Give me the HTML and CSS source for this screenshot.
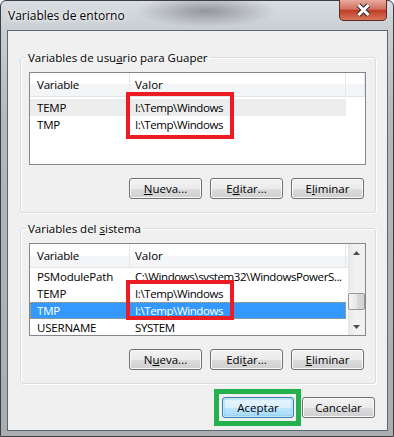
FILE: index.html
```html
<!DOCTYPE html>
<html lang="es">
    <head>
        <meta charset="UTF-8">
        <meta name="viewport" content="width=device-width, initial-scale=1.0">
        <title>Variables de entorno</title>
        <link rel="stylesheet" href="styles.css">
    </head>
    <body>
        <div class="desktop">
            <div class="window">
                <!-- Title bar -->
                <div class="titlebar">
                    <span class="title">Variables de entorno</span>
                    <div class="close-btn">
                        <svg width="48" height="21" viewBox="0 0 48 21">
                            <defs>
                                <linearGradient id="closeGrad" x1="0" y1="0" x2="0" y2="1">
                                    <stop offset="0" stop-color="#e9aa9e"/>
                                    <stop offset="0.45" stop-color="#d26f5e"/>
                                    <stop offset="0.5" stop-color="#c13b26"/>
                                    <stop offset="1" stop-color="#d77a5e"/>
                                </linearGradient>
                            </defs>
                            <path d="M0.5 0 V16 Q0.5 20.5 5 20.5 H43 Q47.5 20.5 47.5 16 V0" fill="url(#closeGrad)" stroke="#5b2b24"/>
                            <path d="M19.5 5 L29.5 15 M29.5 5 L19.5 15" stroke="#3b2c2a" stroke-width="5"/>
                            <path d="M19.5 5 L29.5 15 M29.5 5 L19.5 15" stroke="#ffffff" stroke-width="3"/>
                        </svg>
                    </div>
                </div>

                <!-- Client area -->
                <div class="client">
                    <!-- User variables -->
                    <fieldset class="group group-user">
                        <legend>Variables de usu<u>a</u>rio para Guaper</legend>
                        <div class="listview">
                            <div class="lv-main">
                                <div class="lv-header">
                                    <div class="col col-name">Variable</div>
                                    <div class="col col-value">Valor</div>
                                    <div class="col col-rest"></div>
                                </div>
                                <div class="lv-rows rows-user">
                                    <div class="lv-row row-inactive">
                                        <span class="col col-name">TEMP</span>
                                        <span class="col col-value">I:\Temp\Windows</span>
                                    </div>
                                    <div class="lv-row">
                                        <span class="col col-name">TMP</span>
                                        <span class="col col-value">I:\Temp\Windows</span>
                                    </div>
                                </div>
                            </div>
                        </div>
                        <div class="group-buttons">
                            <button class="btn"><u>N</u>ueva...</button>
                            <button class="btn">E<u>d</u>itar...</button>
                            <button class="btn">E<u>l</u>iminar</button>
                        </div>
                    </fieldset>

                    <!-- System variables -->
                    <fieldset class="group group-system">
                        <legend>Variables del <u>s</u>istema</legend>
                        <div class="listview">
                            <div class="lv-main">
                                <div class="lv-header">
                                    <div class="col col-name">Variable</div>
                                    <div class="col col-value">Valor</div>
                                </div>
                                <div class="lv-rows">
                                    <div class="lv-row">
                                        <span class="col col-name">PSModulePath</span>
                                        <span class="col col-value">C:\Windows\system32\WindowsPowerS...</span>
                                    </div>
                                    <div class="lv-row">
                                        <span class="col col-name">TEMP</span>
                                        <span class="col col-value">I:\Temp\Windows</span>
                                    </div>
                                    <div class="lv-row row-selected">
                                        <span class="col col-name">TMP</span>
                                        <span class="col col-value">I:\Temp\Windows</span>
                                    </div>
                                    <div class="lv-row">
                                        <span class="col col-name">USERNAME</span>
                                        <span class="col col-value">SYSTEM</span>
                                    </div>
                                </div>
                            </div>
                            <div class="scrollbar">
                                <div class="sb-arrow">
                                    <svg width="7" height="4" viewBox="0 0 7 4"><path d="M3.5 0 L7 4 H0 Z" fill="#4d4d4d"/></svg>
                                </div>
                                <div class="sb-track">
                                    <div class="sb-thumb"></div>
                                </div>
                                <div class="sb-arrow">
                                    <svg width="7" height="4" viewBox="0 0 7 4"><path d="M0 0 H7 L3.5 4 Z" fill="#4d4d4d"/></svg>
                                </div>
                            </div>
                        </div>
                        <div class="group-buttons">
                            <button class="btn">N<u>u</u>eva...</button>
                            <button class="btn">Edi<u>t</u>ar...</button>
                            <button class="btn"><u>E</u>liminar</button>
                        </div>
                    </fieldset>

                    <!-- Dialog buttons -->
                    <div class="dialog-buttons">
                        <button class="btn btn-default">Aceptar</button>
                        <button class="btn">Cancelar</button>
                    </div>
                </div>
            </div>

            <!-- Annotation marks -->
            <div class="mark mark-red mark-user"></div>
            <div class="mark mark-red mark-system"></div>
            <div class="mark mark-green"></div>
        </div>
    </body>
</html>
```

FILE: styles.css
```css
* {
    box-sizing: border-box;
}

body {
    margin: 0;
    font-family: "Open Sans", sans-serif;
    font-size: 11.5px;
    color: #000;
    background-color: #fff;
}

.desktop {
    position: relative;
    width: 394px;
    height: 437px;
}

.window {
    width: 394px;
    height: 437px;
    display: flex;
    flex-direction: column;
    padding: 0 5px 5px 6px;
    border: 1px solid #3d3f42;
    border-radius: 6px 6px 0 0;
    background:
        radial-gradient(ellipse 70px 16px at 205px 10px, rgba(70, 72, 76, 0.45), rgba(70, 72, 76, 0)),
        linear-gradient(#d8dde2, #c9ced3 29px, #b3b8bd 120px, #a9aeb3);
}

.titlebar {
    height: 29px;
    display: flex;
    justify-content: space-between;
    align-items: flex-start;
}

.title {
    padding: 7px 0 0 1px;
    font-size: 12px;
    line-height: 15px;
    color: #000;
    text-shadow: 0 0 6px #fff, 0 0 3px #fff;
}

.close-btn {
    margin: -1px 1px 0 0;
    height: 21px;
}

.close-btn svg {
    display: block;
}

.client {
    flex: 1;
    display: flex;
    flex-direction: column;
    padding: 0 11px 0 12px;
    border: 1px solid #5d6670;
    background-color: #f0f0f0;
}

/* Group boxes */
.group {
    margin: 0;
    padding: 7px 9px 13px 8px;
    border: 1px solid #d5dfe5;
    border-radius: 3px;
    box-shadow: inset 1px 1px 0 #fff, 1px 1px 0 #fff;
}

.group-user {
    margin-top: 19px;
}

.group-system {
    margin-top: 8px;
}

.group legend {
    margin-left: -3px;
    padding: 0 2px;
    line-height: 15px;
}

/* List views */
.listview {
    height: 93px;
    display: flex;
    border: 1px solid #828790;
    background-color: #fff;
}

.lv-main {
    flex: 1;
}

.lv-header {
    display: flex;
    height: 24px;
    border-bottom: 1px solid #e5e5e5;
    background: linear-gradient(#fff 50%, #f4f5f7 50%);
}

.lv-header .col {
    line-height: 23px;
    border-right: 1px solid #e3e8ee;
}

.lv-header .col-rest {
    flex: 1;
}

.rows-user {
    padding-top: 2px;
}

.col {
    white-space: nowrap;
    overflow: hidden;
}

.col-name {
    width: 100px;
    padding-left: 7px;
    letter-spacing: -0.2px;
}

.col-value {
    width: 216px;
    padding-left: 5px;
    letter-spacing: -0.4px;
}

.lv-header .col-value {
    letter-spacing: 0;
}

.lv-row {
    display: flex;
    width: 316px;
    height: 17px;
    line-height: 17px;
}

.row-inactive {
    background-color: #ededed;
}

.row-selected {
    color: #fff;
    background-color: #3399ff;
    outline: 1px dotted #e39a3c;
    outline-offset: -1px;
}

/* Scrollbar */
.scrollbar {
    width: 17px;
    display: flex;
    flex-direction: column;
    background: linear-gradient(to right, #e6e6e6, #f2f2f2 40%, #f0f0f0);
}

.sb-arrow {
    height: 17px;
    display: flex;
    align-items: center;
    justify-content: center;
}

.sb-track {
    flex: 1;
    display: flex;
    flex-direction: column;
    justify-content: flex-end;
    padding-bottom: 8px;
}

.sb-thumb {
    height: 17px;
    border: 1px solid #979797;
    border-radius: 2px;
    background: linear-gradient(to right, #f3f3f3, #e8e8e8 50%, #d9d9d9 50%, #d2d2d2);
}

/* Buttons */
.group-buttons {
    display: flex;
    justify-content: flex-end;
    gap: 8px;
    margin-top: 13px;
    padding-right: 2px;
}

.dialog-buttons {
    display: flex;
    justify-content: flex-end;
    gap: 8px;
    margin-top: 13px;
    padding-right: 1px;
}

.btn {
    width: 73px;
    height: 21px;
    padding: 0;
    font-family: inherit;
    font-size: 11.5px;
    color: #000;
    border: 1px solid #707070;
    border-radius: 3px;
    background: linear-gradient(#f2f2f2, #ebebeb 50%, #dddddd 50%, #cfcfcf);
    box-shadow: inset 0 0 0 1px #fbfbfb;
}

.btn-default {
    width: 72px;
    border-color: #3c7fb1;
    background: linear-gradient(#eaf6fd, #d9f0fc 50%, #bee6fd 50%, #a7d9f5);
    box-shadow: inset 0 0 0 1px #c3e7fa, inset 0 0 2px 1px #6cc3ef;
}

/* Red and green annotation boxes */
.mark {
    position: absolute;
}

.mark-red {
    border: 4px solid #ed1c24;
}

.mark-user {
    left: 126px;
    top: 92px;
    width: 108px;
    height: 47px;
}

.mark-system {
    left: 126px;
    top: 280px;
    width: 108px;
    height: 40px;
}

.mark-green {
    left: 214px;
    top: 389px;
    width: 87px;
    height: 37px;
    border: 5px solid #22b14c;
}
```
